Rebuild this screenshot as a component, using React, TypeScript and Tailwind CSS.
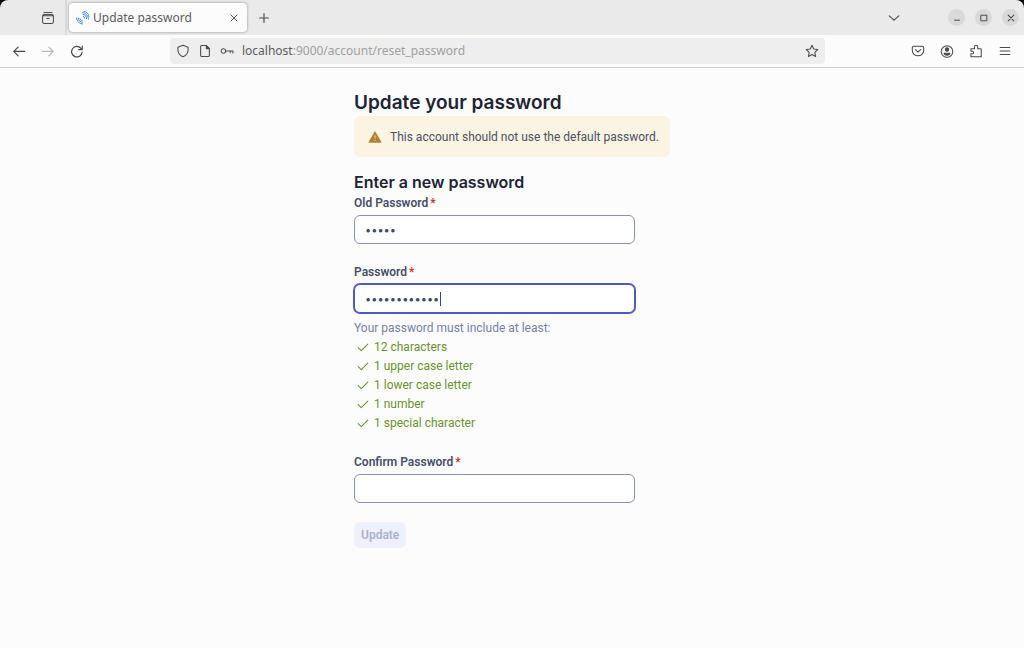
import React from 'react'

const rules = [
  '12 characters',
  '1 upper case letter',
  '1 lower case letter',
  '1 number',
  '1 special character',
]

const stroke = {
  fill: 'none',
  stroke: 'currentColor',
  strokeLinecap: 'round' as const,
  strokeLinejoin: 'round' as const,
}

function Icon({
  children,
  className = 'size-3.5',
  width = 1.2,
}: {
  children: React.ReactNode
  className?: string
  width?: number
}) {
  return (
    <svg viewBox="0 0 16 16" className={className} {...stroke} strokeWidth={width} aria-hidden="true">
      {children}
    </svg>
  )
}

function Favicon() {
  return (
    <svg viewBox="0 0 16 16" className="size-4 shrink-0" fill="none" stroke="#4a90de" strokeWidth="1" aria-hidden="true">
      <path d="M7 2.500a7 7 0 0 1 6.500 7M7.500 4.400a4.600 4.600 0 0 1 4.100 4.600M8 6.300a2.400 2.400 0 0 1 1.700 2.400M8.500 1.500a6 6 0 0 1 5.500 5.500" />
      <path d="M1.500 7.500a6.500 6.500 0 0 0 6.500 6.500M3.200 7.800a4.600 4.600 0 0 0 4.600 4.500M4.900 8.200a2.600 2.600 0 0 0 2.600 2.500" />
    </svg>
  )
}

function TabStrip() {
  return (
    <div className="flex h-[35px] bg-[#eaeaea]">
      <div className="flex w-[67px] justify-end border-r-2 border-[#dadada] pr-2.5">
        <button aria-label="Recent browsing">
          <Icon>
            <path d="M3.500 1.800h9M1.800 5.400h12.400v6.800a2 2 0 0 1-2 2H3.800a2 2 0 0 1-2-2zM1.800 5.400l1.500-1.500h9.400l1.500 1.500M6.500 8.600h3" />
          </Icon>
        </button>
      </div>
      <div className="ml-0.5 mt-[3px] flex h-[29px] w-[178px] items-center rounded bg-[#fcfcfc] pl-1.5 pr-2 shadow-[0_0_3px_rgba(0,0,0,0.4)]">
        <Favicon />
        <span className="ml-0.5 flex-1 whitespace-nowrap text-[12px] text-[#5b5b5b]">Update password</span>
        <button aria-label="Close tab">
          <Icon className="size-2.5" width={1.5}>
            <path d="M3 3l10 10M13 3L3 13" />
          </Icon>
        </button>
      </div>
      <button aria-label="New tab" className="ml-2.5">
        <Icon width={1.3}>
          <path d="M8 3v10M3 8h10" />
        </Icon>
      </button>
      <button aria-label="List all tabs" className="ml-auto mr-[47px]">
        <Icon width={1.3}>
          <path d="M2.500 5.500L8 10.500l5.500-5" />
        </Icon>
      </button>
      <div className="flex items-center gap-2.5 pr-[5px]">
        <button aria-label="Minimize" className="grid size-[17px] place-items-center rounded-full bg-[#d9d9d9]">
          <Icon className="size-2.5" width={1.6}>
            <path d="M4 11.500h8" />
          </Icon>
        </button>
        <button aria-label="Maximize" className="grid size-[17px] place-items-center rounded-full bg-[#d9d9d9]">
          <Icon className="size-2.5" width={1.6}>
            <path d="M3.500 3.500h9v9h-9z" />
          </Icon>
        </button>
        <button aria-label="Close" className="grid size-[17px] place-items-center rounded-full bg-[#d9d9d9]">
          <Icon className="size-2.5" width={1.8}>
            <path d="M3.500 3.500l9 9M12.500 3.500l-9 9" />
          </Icon>
        </button>
      </div>
    </div>
  )
}

function Toolbar() {
  return (
    <div className="flex h-[33px] items-center border-b border-[#cccccc] bg-[#fcfcfc] px-3">
      <div className="flex w-[158px] shrink-0 gap-[15px]">
        <button aria-label="Back">
          <Icon width={1.4}>
            <path d="M14.500 8.500H2M7 3.500l-5 5 5 5" />
          </Icon>
        </button>
        <button aria-label="Forward" disabled className="text-[#b8b8b8]">
          <Icon width={1.4}>
            <path d="M1.500 8.500H14M9 3.500l5 5-5 5" />
          </Icon>
        </button>
        <button aria-label="Reload">
          <Icon width={1.4}>
            <path d="M13.800 9.500a6 6 0 1 1-1.500-4.700l1.400 1.400M14 2.500v4h-4" />
          </Icon>
        </button>
      </div>
      <div className="flex h-[26px] min-w-0 max-w-[655px] flex-1 items-center gap-2 rounded bg-[#eeeeee] px-1.5">
        <Icon className="size-3.5 shrink-0">
          <path d="M8 1.400l5.800 2.200v3c0 3.600-2.300 6.600-5.800 8-3.500-1.400-5.800-4.400-5.800-8v-3z" />
        </Icon>
        <Icon className="size-3.5 shrink-0">
          <path d="M4 1.800h5.500L13 5.300v7.900a1 1 0 0 1-1 1H4a1 1 0 0 1-1-1V2.800a1 1 0 0 1 1-1z" />
          <path d="M9.500 1.800v3.500H13z" fill="currentColor" />
        </Icon>
        <Icon className="size-3.5 shrink-0">
          <path d="M6.500 8a2.600 2.600 0 1 1-5.200 0 2.600 2.600 0 0 1 5.200 0zM6.500 8h8.300v2.400M11.800 8v2" />
        </Icon>
        <div className="relative flex-1 text-[12px] leading-4">
          <input
            aria-label="Address"
            readOnly
            value="localhost:9000/account/reset_password"
            className="block h-4 w-full bg-transparent text-[#a0a0a0] outline-none"
          />
          {/* host part is drawn darker than the rest of the address */}
          <span aria-hidden="true" className="pointer-events-none absolute left-0 top-0 bg-[#eeeeee] text-[#5b5b5b]">
            localhost
          </span>
        </div>
        <button aria-label="Bookmark this page">
          <Icon>
            <path d="M8 1.500l2 4.200 4.600.6-3.400 3.200.9 4.700L8 12l-4.100 2.200.9-4.700L1.400 6.300 6 5.700z" />
          </Icon>
        </button>
      </div>
      <div className="ml-auto flex shrink-0 gap-[15px]">
        <button aria-label="Save to Pocket">
          <Icon>
            <path d="M3 2.500h10a1.500 1.500 0 0 1 1.500 1.500v3.500a6.500 6 0 0 1-13 0V4A1.500 1.500 0 0 1 3 2.500zM5 6.500l3 2.800 3-2.800" />
          </Icon>
        </button>
        <button aria-label="Account">
          <Icon>
            <circle cx="8" cy="8.5" r="6.6" />
            <circle cx="8" cy="6.3" r="1.9" fill="currentColor" />
            <path d="M4.700 10.500h6.600c0 1.300-1.500 2.200-3.300 2.200s-3.300-.9-3.300-2.200z" fill="currentColor" />
          </Icon>
        </button>
        <button aria-label="Extensions">
          <Icon>
            <path d="M2.200 5.500H6.200V3.400a1.900 1.900 0 0 1 3.800 0v2.100h3.200a.8.800 0 0 1 .8.800v8.200H2.200v-3.300h1.600a1.500 1.500 0 0 0 0-3H2.200z" />
          </Icon>
        </button>
        <button aria-label="Open application menu">
          <Icon>
            <path d="M2.500 4h11M2.500 8h11M2.500 12h11" />
          </Icon>
        </button>
      </div>
    </div>
  )
}

function PasswordField({
  id,
  label,
  defaultValue,
  focused,
}: {
  id: string
  label: string
  defaultValue?: string
  focused?: boolean
}) {
  return (
    <div className="flex flex-col gap-1">
      <label htmlFor={id} className="font-['Roboto',sans-serif] text-[12px] font-semibold leading-4 text-[#484f66]">
        {label}
        <span className="ml-0.5 text-[#c4372f]">*</span>
      </label>
      <div className="relative">
        <input
          id={id}
          type="password"
          defaultValue={defaultValue}
          autoFocus={focused}
          className="block h-[29px] w-full rounded-md border border-[#8790b0] bg-white px-2.5 text-[11px] text-[#3f4760] caret-transparent outline-none focus:border-[#5059bf] focus:ring-1 focus:ring-[#5059bf]"
        />
        {focused && <span className="pointer-events-none absolute left-[86px] top-2 h-3.5 w-px bg-[#3f4760]" />}
      </div>
    </div>
  )
}

function App() {
  return (
    <div className="min-h-screen bg-[#fcfcfc] font-['Inter',sans-serif] text-[#4b5165]">
      <div className="bg-black font-['Noto_Sans',sans-serif] text-[#4a4a4a]">
        <div className="overflow-hidden rounded-t-lg">
          <TabStrip />
          <Toolbar />
        </div>
      </div>
      <main className="mx-auto w-[316px] pt-[23px]">
        <h1 className="text-[19px] font-semibold leading-6 text-[#1f2333]">Update your password</h1>
        <div className="mt-px flex h-[41px] items-center gap-2 rounded-md bg-[#fcf4e3] px-3.5 font-['Roboto',sans-serif] text-[12px]">
          <svg viewBox="0 0 16 16" className="size-3.5 shrink-0" aria-hidden="true">
            <path d="M8 2L15 14H1z" fill="#b5802f" stroke="#b5802f" strokeLinejoin="round" />
            <path d="M8 6v4M8 11.500v1.200" stroke="#e6cfa4" strokeWidth="1.2" />
          </svg>
          <p className="whitespace-nowrap">This account should not use the default password.</p>
        </div>
        <form className="mt-[15px] w-[281px]">
          <h2 className="text-[16px] font-semibold leading-5 text-[#1f2333]">Enter a new password</h2>
          <div className="mt-[3px]">
            <PasswordField id="old" label="Old Password" defaultValue="admin" />
          </div>
          <div className="mt-5">
            <PasswordField id="password" label="Password" defaultValue="Password123!" focused />
          </div>
          <div className="mt-1.5 font-['Roboto',sans-serif] text-[12px] leading-[19px]">
            <p className="text-[#7581a5]">Your password must include at least:</p>
            <ul className="text-[#6b9132]">
              {rules.map((rule) => (
                <li key={rule} className="flex items-center gap-1 pl-0.5">
                  <Icon>
                    <path d="M2.500 7.500l3.500 3.500 7.500-7.500" />
                  </Icon>
                  {rule}
                </li>
              ))}
            </ul>
          </div>
          <div className="mt-[21px]">
            <PasswordField id="confirm" label="Confirm Password" />
          </div>
          <button
            type="submit"
            disabled
            className="mt-[19px] h-[26px] rounded-md bg-[#eef1f9] px-[7px] font-['Roboto',sans-serif] text-[12px] font-semibold text-[#abb2cb]"
          >
            Update
          </button>
        </form>
      </main>
    </div>
  )
}

export default App
